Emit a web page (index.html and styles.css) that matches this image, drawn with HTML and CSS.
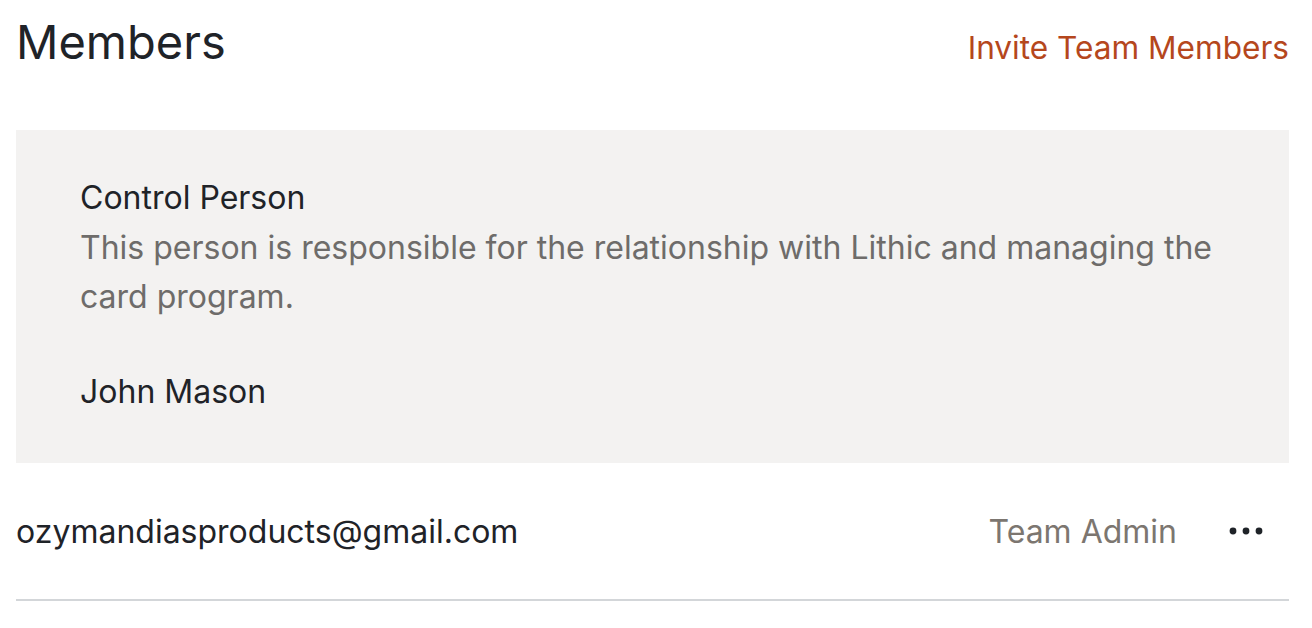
FILE: index.html
```html
<!DOCTYPE html>
<html>
<head>
<meta charset="utf-8">
<link rel="stylesheet" href="styles.css">
</head>
<body>
<div class="page">
  <header class="header">
    <h1 class="title">Members</h1>
    <a class="invite" href="#">Invite Team Members</a>
  </header>
  <section class="control">
    <div class="control-title">Control Person</div>
    <p class="control-desc">This person is responsible for the relationship with Lithic and managing the card program.</p>
    <div class="control-name">John Mason</div>
  </section>
  <div class="member-row">
    <span class="email">ozymandiasproducts@gmail.com</span>
    <span class="role">Team Admin</span>
    <button class="more" aria-label="More">
      <svg width="34" height="8" viewBox="0 0 34 8"><circle cx="4" cy="4" r="3.4" fill="#1f2328"/><circle cx="17" cy="4" r="3.4" fill="#1f2328"/><circle cx="30" cy="4" r="3.4" fill="#1f2328"/></svg>
    </button>
  </div>
</div>
</body>
</html>
```

FILE: styles.css
```css
* { box-sizing: border-box; }
html, body { margin: 0; padding: 0; background: #fff; }
body { font-family: Inter, "Noto Sans", sans-serif; color: #1f2328; }
.page { padding: 0 23px 0 16px; }
.header { display: flex; justify-content: space-between; align-items: flex-start; height: 130px; }
.title { margin: 0; padding-top: 13px; font-size: 47px; font-weight: 400; line-height: 58px; }
.invite { padding-top: 28px; font-size: 31.6px; line-height: 40px; color: #b5471d; text-decoration: none; }
.control { background: #f3f2f1; padding: 43px 64px 47px; }
.control-title { font-size: 32px; line-height: 50px; }
.control-desc { margin: 0; font-size: 32px; line-height: 49px; color: #6e6c6a; }
.control-name { margin-top: 47px; font-size: 32px; line-height: 48px; }
.member-row { display: flex; align-items: center; height: 138px; border-bottom: 2px solid #d3d6d9; }
.email { flex: 1; font-size: 32px; }
.role { font-size: 32px; color: #7c7670; margin-right: 52px; }
.more { border: 0; background: none; padding: 0; margin-right: 26px; display: flex; }
```
